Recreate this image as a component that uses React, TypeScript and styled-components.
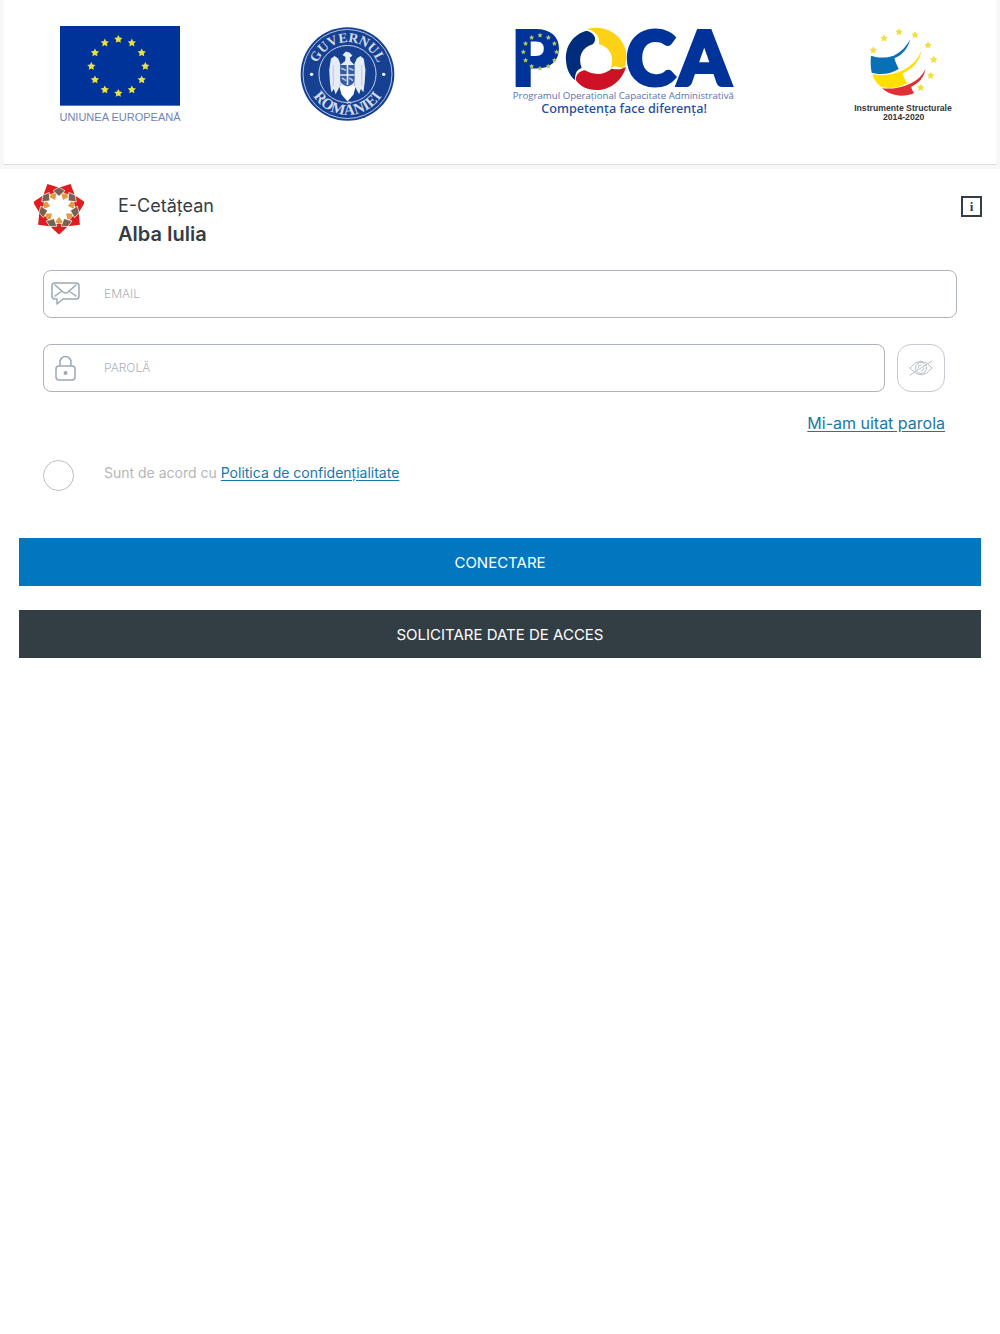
import React, { useState } from "react";
import styled, { createGlobalStyle } from "styled-components";

const GlobalStyle = createGlobalStyle`
  *, *::before, *::after { box-sizing: border-box; }
  body {
    margin: 0;
    background: #fff;
    color: #343d44;
    font-family: Inter, "Liberation Sans", sans-serif;
  }
  button, input { font-family: inherit; }
`;

const Banner = styled.header`
  background: #f7f7f7;
  padding: 0 4px 4px;
`;

const BannerCard = styled.div`
  display: flex;
  justify-content: space-between;
  align-items: flex-start;
  padding: 26px 44px 40px 56px;
  background: #fff;
  border-bottom: 1px solid #dcdcdc;

  svg { display: block; overflow: visible; }
`;

const Brand = styled.div`
  display: flex;
  align-items: flex-start;
  padding: 15px 18px 0 34px;
`;

const BrandName = styled.h1`
  flex: 1;
  margin: 8px 0 0 34px;
  font-size: 18px;
  line-height: 28px;
  font-weight: 400;

  strong {
    display: block;
    font-size: 20px;
    font-weight: 600;
  }
`;

const InfoButton = styled.button`
  width: 21px;
  height: 21px;
  margin-top: 12px;
  padding: 0;
  border: 2px solid #343d44;
  background: #fff;
  color: #343d44;
  font: bold 13px/16px "Liberation Serif", serif;
`;

const Form = styled.form`
  padding: 22px 19px 24px;
`;

const Fields = styled.div`
  display: flex;
  flex-direction: column;
  padding: 0 24px;
`;

const Field = styled.label`
  flex: 1 0 48px;
  display: flex;
  align-items: center;
  height: 48px;
  padding-left: 7px;
  border: 1px solid #adb4bb;
  border-radius: 8px;

  svg { flex: none; }
`;

const TextInput = styled.input`
  flex: 1;
  min-width: 0;
  height: 100%;
  margin-left: 24px;
  padding: 0 0 2px;
  border: 0;
  outline: 0;
  background: transparent;
  color: #343d44;
  font-size: 12px;

  &::placeholder { color: #aeb1b4; opacity: 1; font-weight: 300; }
`;

const PasswordRow = styled.div`
  display: flex;
  gap: 12px;
  margin-top: 26px;
  padding-right: 12px;
`;

const EyeButton = styled.button`
  display: flex;
  align-items: center;
  justify-content: center;
  width: 48px;
  height: 48px;
  padding: 0;
  border: 1px solid #c6cad2;
  border-radius: 14px;
  background: #fff;
`;

const Link = styled.a`
  color: #1a77aa;
  text-decoration: underline;
  text-underline-offset: 2px;
`;

const ForgotRow = styled.div`
  margin-top: 20px;
  padding-right: 12px;
  text-align: right;
  font-size: 16px;
  line-height: 22px;
`;

const Consent = styled.div`
  display: flex;
  gap: 30px;
  margin-top: 26px;
  color: #b4b7ba;
  font-size: 14px;
  line-height: 26px;
`;

const RoundCheck = styled.input`
  appearance: none;
  flex: none;
  width: 31px;
  height: 31px;
  margin: 0;
  border: 1px solid #bfbfbf;
  border-radius: 50%;

  &:checked { background: #0277bf; box-shadow: inset 0 0 0 6px #fff; }
`;

const Actions = styled.div`
  display: grid;
  gap: 24px;
  margin-top: 47px;
`;

const ActionButton = styled.button<{ $tone: string }>`
  height: 48px;
  border: 0;
  background: ${(p) => p.$tone};
  color: #fff;
  font-size: 15px;
`;

const starPoints = (cx: number, cy: number, r: number) =>
  Array.from({ length: 10 }, (_, i) => {
    const a = (i * Math.PI) / 5 - Math.PI / 2;
    const d = i % 2 ? r * 0.5 : r;
    return `${cx + d * Math.cos(a)},${cy + d * Math.sin(a)}`;
  }).join(" ");

const StarRing = ({ cx, cy, radius, size, fill }: { cx: number; cy: number; radius: number; size: number; fill: string }) => (
  <g fill={fill}>
    {Array.from({ length: 12 }, (_, i) => {
      const a = (i * Math.PI) / 6;
      return <polygon key={i} points={starPoints(cx + radius * Math.cos(a), cy + radius * Math.sin(a), size)} />;
    })}
  </g>
);

const EuLogo = () => (
  <svg width="120" height="98" viewBox="30 33 360 294" role="img" aria-label="Uniunea Europeană">
    <rect x="30" y="33" width="360" height="239" fill="#003399" />
    <StarRing cx={205} cy={154} radius={81} size={13} fill="#e8e23c" />
    <text x="210" y="317" textAnchor="middle" fontFamily="Liberation Sans, sans-serif" fontSize="33" fill="#6f83b8">
      UNIUNEA EUROPEANĂ
    </text>
  </svg>
);

const GovernmentLogo = () => (
  <svg width="95" height="96" viewBox="30 34 286 286" role="img" aria-label="Guvernul României">
    <defs>
      <path id="sealTop" d="M77 177a96 96 0 0 1 192 0" />
      <path id="sealBottom" d="M50 177a123 123 0 0 0 246 0" />
    </defs>
    <circle cx="173" cy="177" r="141" fill="#164193" />
    <circle cx="173" cy="177" r="134" fill="none" stroke="#b5c3e0" strokeWidth="3" />
    <circle cx="173" cy="177" r="86" fill="none" stroke="#c3cfe6" strokeWidth="3" />
    <g fill="#d3dcee" fontFamily="Liberation Serif, serif" fontWeight="700" textAnchor="middle">
      <text fontSize="41"><textPath href="#sealTop" startOffset="50%">GUVERNUL</textPath></text>
      <text fontSize="46"><textPath href="#sealBottom" startOffset="50%">ROMÂNIEI</textPath></text>
    </g>
    <circle cx="65" cy="178" r="5" fill="#fff" />
    <circle cx="282" cy="178" r="5" fill="#fff" />
    <g fill="#e6ecf6">
      <path d="M151 146L145 130 134 123 123 131 118 165 120 200 124 232 132 222 137 238 145 224 151 210Z" />
      <path d="M194 146L201 130 212 123 222 131 227 165 225 200 221 232 213 222 208 238 200 224 194 210Z" />
      <path d="M158 120L168 109 180 113 188 122 180 127 182 138 194 150 194 216 151 216 151 150 166 138 167 126Z" />
    </g>
    <path d="M148 213h50l-7 26-18 21-18-21z" fill="#fff" />
    <path d="M151 150h43v45q0 13-21 20q-22-7-22-20z" fill="#355aa3" />
    <path d="M173 150v60M151 180h43" stroke="#e6ecf6" strokeWidth="5" />
    <path d="M154 160l14 6m10-6l13 6m-35 23l13 8m9-8l12 8" stroke="#b6c5e0" strokeWidth="5" />
    <path d="M130 150v62M216 150v62" fill="none" stroke="#b9c8e2" strokeWidth="3" />
  </svg>
);

const PocaLogo = () => (
  <svg width="220" height="92" viewBox="28 36 660 276" role="img" aria-label="POCA">
    <g fill="#00339a" stroke="#00339a" strokeWidth="12" fontFamily="Lato, sans-serif" fontWeight="900" fontSize="222">
      <text x="22" y="212">P</text>
      <text x="365" y="212">C</text>
      <text x="521" y="212">A</text>
    </g>
    <StarRing cx={106} cy={114} radius={50} size={8} fill="#b6c75a" />
    <path d="M246 50C205 61 181 96 184 140c2 26 10 43 27 58 0-20 5-31 20-36-12-33 0-61 33-71 14-13 8-34-18-41z" fill="#002c7c" />
    <path d="M247 45c46-13 95 9 112 52 9 25 8 48-2 67-14-7-28-10-38-1 11-39-5-64-36-72 3-22-8-39-36-46z" fill="#fcd116" />
    <path d="M213 198c2-19 12-27 28-29 27 16 57 14 80-5 17 2 27 5 43-6-10 38-44 69-86 70-28 1-51-10-65-30z" fill="#ce1126" />
    <text x="356" y="255" textAnchor="middle" fontFamily="Open Sans, sans-serif" fontSize="29" fill="#5773b5">
      Programul Operațional Capacitate Administrativă
    </text>
    <text x="358" y="296" textAnchor="middle" fontFamily="Noto Sans, sans-serif" fontWeight="500" fontSize="38" fill="#244d9f">
      Competența face diferența!
    </text>
  </svg>
);

const structuralStars = [[86, 106], [118, 70], [163, 51], [211, 60], [250, 91], [267, 134], [258, 182], [228, 218]];

const StructuralLogo = () => (
  <svg width="98" height="98" viewBox="28 33 294 294" role="img" aria-label="Instrumente Structurale 2014-2020">
    <g fill="#f3df3d">
      {structuralStars.map(([x, y]) => <polygon key={x} points={starPoints(x, y, 12)} />)}
    </g>
    <path d="M79 122c24 8 45 7 68 0 21-9 37-26 50-49-8 29-25 48-48 57 4 15 9 22 13 32-21 13-50 20-81 11-3-17-4-33-2-51z" fill="#0870b7" />
    <path d="M83 178c33 6 65 0 93-13 27-13 44-33 55-59-6 32-26 56-57 69 3 11 8 21 14 29-23 14-47 18-77 13-14-10-23-22-28-39z" fill="#ffe000" />
    <path d="M112 220c29 3 56-2 84-14 24-11 36-25 47-45-5 26-20 43-43 54 1 9 4 13 9 19-32 13-69 11-97-14z" fill="#df3036" />
    <g fill="#33363a" fontFamily="Liberation Sans, sans-serif" fontSize="26" fontWeight="700" textAnchor="middle">
      <text x="175" y="287">Instrumente Structurale</text>
      <text x="177" y="316">2014-2020</text>
    </g>
  </svg>
);

const petals = Array.from({ length: 7 }, (_, i) => (i * 360) / 7);

const CityLogo = () => (
  <svg width="50" height="50" viewBox="-75 -72 150 150" role="img" aria-label="Alba Iulia">
    {petals.map((angle) => (
      <g key={angle} transform={`rotate(${180 + angle})`}>
        <path d="M0-80L-25-56-14-48 14-48 25-56z" fill="#df1c1f" />
        <path d="M0-49L-12-42 0-27 12-42z" fill="#e29a43" />
      </g>
    ))}
    {petals.map((angle) => (
      <path
        key={angle}
        transform={`rotate(${angle})`}
        d="M0-62L-18-52 0-35 18-52z"
        fill="#79604f"
        stroke="#fff"
        strokeWidth="2"
      />
    ))}
  </svg>
);

const MailIcon = () => (
  <svg width="29" height="26" viewBox="0 0 29 26" fill="none" stroke="#9ba9b4" strokeWidth="1.5" strokeLinejoin="round" strokeLinecap="round" aria-hidden="true">
    <path d="M4 2h21q3 0 3 3v10q0 3-3 3H12l-6 5v-5H4q-3 0-3-3V5q0-3 3-3z" />
    <path d="M4 4l8 7q2.500 2 5 0l8-7M4 15l7-5M25 15l-7-5" />
  </svg>
);

const LockIcon = () => (
  <svg width="29" height="26" viewBox="0 0 29 26" fill="none" stroke="#9ba9b4" strokeWidth="1.500" aria-hidden="true">
    <rect x="5" y="11" width="19" height="14" rx="3" />
    <path d="M9 11V7a5.500 5.500 0 0 1 11 0v4" />
    <circle cx="14.500" cy="18" r="2" fill="#9ba9b4" stroke="none" />
  </svg>
);

const EyeOffIcon = () => (
  <svg width="24" height="18" viewBox="0 0 24 18" fill="none" stroke="#b9bfc5" strokeLinecap="round" aria-hidden="true">
    <path d="M1 9q11-14 22 0q-11 14-22 0z" />
    <circle cx="12" cy="9" r="5.500" />
    <path d="M9 9a3 3 0 0 1 3-3M15 9a3 3 0 0 1-3 3" />
    <path d="M1 16L23 2" />
  </svg>
);

export default function App() {
  const [visible, setVisible] = useState(false);
  return (
    <>
      <GlobalStyle />
      <Banner>
        <BannerCard>
          <EuLogo />
          <GovernmentLogo />
          <PocaLogo />
          <StructuralLogo />
        </BannerCard>
      </Banner>
      <main>
        <Brand>
          <CityLogo />
          <BrandName>E-Cetățean <strong>Alba Iulia</strong></BrandName>
          <InfoButton type="button" aria-label="Informații">i</InfoButton>
        </Brand>
        <Form onSubmit={(e) => e.preventDefault()}>
          <Fields>
            <Field htmlFor="email">
              <MailIcon />
              <TextInput id="email" type="email" placeholder="EMAIL" aria-label="Email" />
            </Field>
            <PasswordRow>
              <Field htmlFor="password">
                <LockIcon />
                <TextInput id="password" type={visible ? "text" : "password"} placeholder="PAROLĂ" aria-label="Parolă" />
              </Field>
              <EyeButton type="button" aria-label="Arată parola" onClick={() => setVisible(!visible)}>
                <EyeOffIcon />
              </EyeButton>
            </PasswordRow>
            <ForgotRow><Link href="#parola">Mi-am uitat parola</Link></ForgotRow>
            <Consent>
              <RoundCheck id="consent" type="checkbox" />
              <label htmlFor="consent">
                Sunt de acord cu <Link href="#politica">Politica de confidențialitate</Link>
              </label>
            </Consent>
          </Fields>
          <Actions>
            <ActionButton $tone="#0277bf">CONECTARE</ActionButton>
            <ActionButton type="button" $tone="#333d44">SOLICITARE DATE DE ACCES</ActionButton>
          </Actions>
        </Form>
      </main>
    </>
  );
}
